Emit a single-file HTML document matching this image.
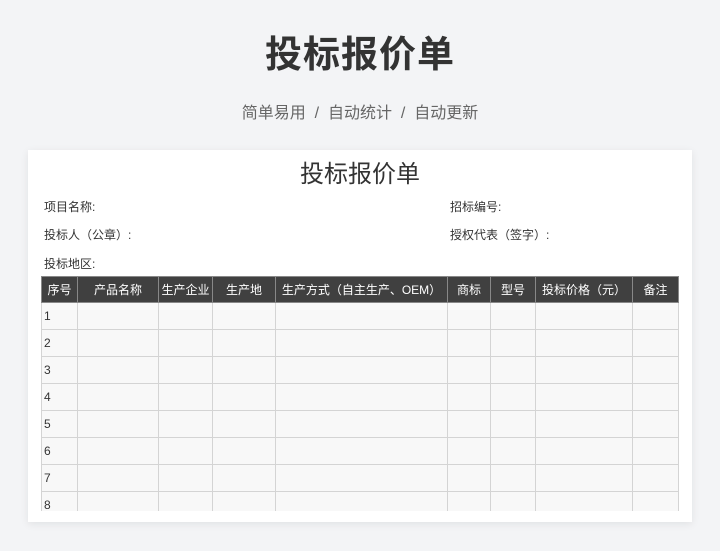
<!DOCTYPE html>
<html><head><meta charset="utf-8"><style>
body{margin:0;width:720px;height:551px;background:#f3f4f6;font-family:"Liberation Sans","Noto Sans CJK SC",sans-serif;position:relative;overflow:hidden}
.t{position:absolute;left:0;width:720px;text-align:center;top:24px;font-size:37px;font-weight:bold;color:#333;letter-spacing:1px}
.s{position:absolute;left:0;width:720px;text-align:center;top:99px;font-size:16px;color:#666}
.card{position:absolute;left:28px;top:150px;width:664px;height:372px;background:#fff;box-shadow:0 2px 8px rgba(0,0,0,.08)}
.h{position:absolute;left:0;width:100%;text-align:center;top:4px;font-size:24px;color:#333}
.l{position:absolute;font-size:12px;color:#333}
table{position:absolute;left:13px;top:126px;border-collapse:collapse;table-layout:fixed}
td,th{border:1px solid #d4d4d4;height:26px;padding:0 2px;font-size:12px;color:#333;background:#f8f8f8;text-align:left;font-weight:normal}
th{background:#404040;color:#fff;text-align:center;border-color:#888;height:25px}
.wrap{position:absolute;left:0;top:0;width:664px;height:361px;overflow:hidden}
</style></head><body>
<div class="t">投标报价单</div>
<div class="s">简单易用 &nbsp;/&nbsp; 自动统计 &nbsp;/&nbsp; 自动更新</div>
<div class="card"><div class="wrap">
<div class="h">投标报价单</div>
<div class="l" style="left:16px;top:48px">项目名称:</div>
<div class="l" style="left:422px;top:48px">招标编号:</div>
<div class="l" style="left:16px;top:76px">投标人（公章）:</div>
<div class="l" style="left:422px;top:76px">授权代表（签字）:</div>
<div class="l" style="left:16px;top:105px">投标地区:</div>
<table>
<colgroup><col style="width:36px"><col style="width:81px"><col style="width:54px"><col style="width:63px"><col style="width:172px"><col style="width:43px"><col style="width:45px"><col style="width:97px"><col style="width:46px"></colgroup>
<tr><th>序号</th><th>产品名称</th><th>生产企业</th><th>生产地</th><th>生产方式（自主生产、OEM）</th><th>商标</th><th>型号</th><th>投标价格（元）</th><th>备注</th></tr>
<tr><td>1</td><td></td><td></td><td></td><td></td><td></td><td></td><td></td><td></td></tr>
<tr><td>2</td><td></td><td></td><td></td><td></td><td></td><td></td><td></td><td></td></tr>
<tr><td>3</td><td></td><td></td><td></td><td></td><td></td><td></td><td></td><td></td></tr>
<tr><td>4</td><td></td><td></td><td></td><td></td><td></td><td></td><td></td><td></td></tr>
<tr><td>5</td><td></td><td></td><td></td><td></td><td></td><td></td><td></td><td></td></tr>
<tr><td>6</td><td></td><td></td><td></td><td></td><td></td><td></td><td></td><td></td></tr>
<tr><td>7</td><td></td><td></td><td></td><td></td><td></td><td></td><td></td><td></td></tr>
<tr><td>8</td><td></td><td></td><td></td><td></td><td></td><td></td><td></td><td></td></tr>
</table>
</div></div>
</body></html>
